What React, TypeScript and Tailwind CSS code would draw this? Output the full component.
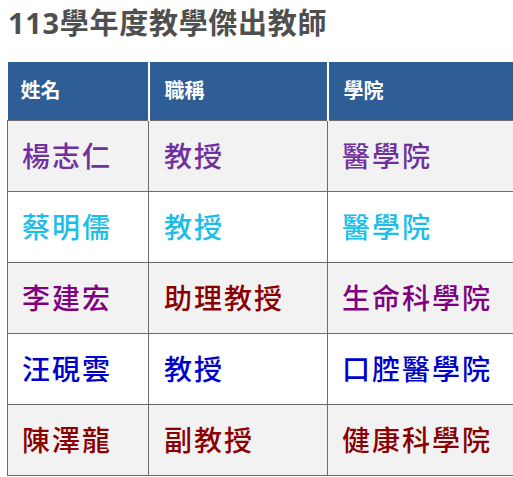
const rows = [
  { name: "楊志仁", title: "教授", college: "醫學院", c: ["text-[#7030a0]", "text-[#7030a0]", "text-[#7030a0]"] },
  { name: "蔡明儒", title: "教授", college: "醫學院", c: ["text-[#1cbde9]", "text-[#1cbde9]", "text-[#1cbde9]"] },
  { name: "李建宏", title: "助理教授", college: "生命科學院", c: ["text-[#800080]", "text-[#8b0000]", "text-[#800080]"] },
  { name: "汪硯雲", title: "教授", college: "口腔醫學院", c: ["text-[#0000cc]", "text-[#0000cc]", "text-[#0000cc]"] },
  { name: "陳澤龍", title: "副教授", college: "健康科學院", c: ["text-[#8b0000]", "text-[#8b0000]", "text-[#8b0000]"] },
];

const App = () => {
  return (
    <div
      className="w-[513px] h-[477px] overflow-hidden bg-white"
      style={{ fontFamily: '"Open Sans", "Noto Sans CJK TC", sans-serif' }}
    >
      <h1 className="pl-[8px] pt-[5px] h-[62px] text-[29px] font-bold leading-[36px] tracking-[0.7px] text-[#4f4f4f]">
        113學年度教學傑出教師
      </h1>
      <table className="ml-[7px] border-collapse w-[560px] table-fixed">
        <colgroup>
          <col className="w-[141px]" />
          <col className="w-[179px]" />
          <col className="w-[240px]" />
        </colgroup>
        <thead>
          <tr className="h-[58px] bg-[#2e5e95] text-white text-[20px] font-bold">
            <th className="text-left pl-[13px] border-r-2 border-white">姓名</th>
            <th className="text-left pl-[15px] border-r-2 border-white">職稱</th>
            <th className="text-left pl-[15px]">學院</th>
          </tr>
        </thead>
        <tbody>
          {rows.map((r, i) => (
            <tr
              key={r.name}
              className={`h-[71px] text-[28px] font-medium tracking-[2px] ${i % 2 === 0 ? "bg-[#f2f2f2]" : "bg-white"}`}
            >
              <td className={`pl-[14px] border border-[#6b6b6b] ${r.c[0]}`}>{r.name}</td>
              <td className={`pl-[15px] border border-[#6b6b6b] ${r.c[1]}`}>{r.title}</td>
              <td className={`pl-[14px] border border-[#6b6b6b] ${r.c[2]}`}>{r.college}</td>
            </tr>
          ))}
        </tbody>
      </table>
    </div>
  );
};

export default App;
